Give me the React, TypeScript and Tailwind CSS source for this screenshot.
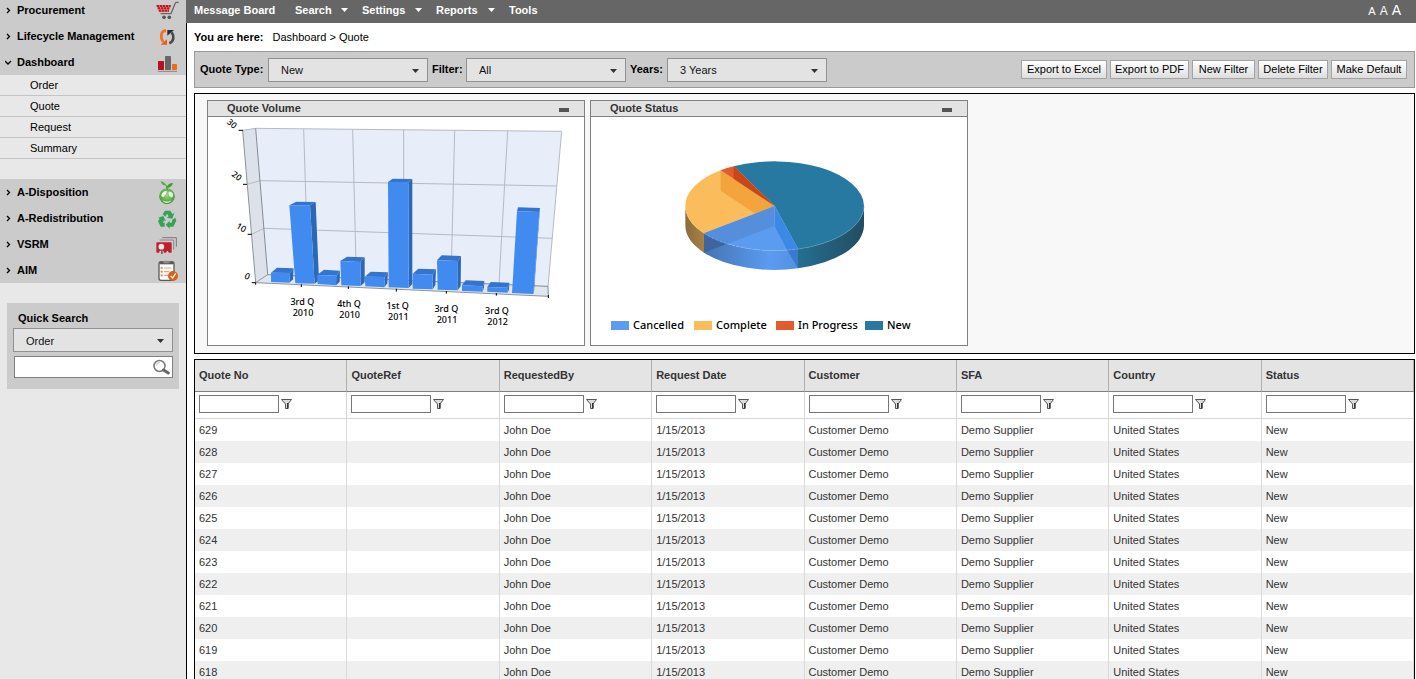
import { useState, type ReactNode } from "react";

/* ---------- Sidebar icons (24x24, drawn on a 72-unit grid) ---------- */

function Icon({ children }: { children: ReactNode }) {
  return (
    <svg className="h-6 w-6 shrink-0" viewBox="0 0 72 72" aria-hidden="true">
      {children}
    </svg>
  );
}

const CartIcon = () => (
  <Icon>
    <path d="M3 21h46l-8 22H15z" fill="#cf8f92" />
    <path d="M5 24h42M8 31h37M11 38h31" stroke="#c4161c" strokeWidth="6" strokeDasharray="7 2" />
    <path d="M71 13h-6c-3 0-4 1-5 4L48 47H17" fill="none" stroke="#666" strokeWidth="4" />
    <circle cx="27" cy="58" r="5.500" fill="#555" />
    <circle cx="43" cy="58" r="5.500" fill="#555" />
  </Icon>
);

const CycleIcon = () => (
  <Icon>
    <path d="M33 20C18 20 14 40 25 54" fill="none" stroke="#f37021" strokeWidth="8" />
    <path d="M17 62h19V46z" fill="#ef5a13" />
    <path d="M43 58c13-5 16-20 7-33" fill="none" stroke="#4a4a4a" strokeWidth="8" />
    <path d="M57 18H37v17z" fill="#2d2d2d" />
  </Icon>
);

const BarsIcon = () => (
  <Icon>
    <rect x="9" y="33" width="18" height="27" rx="2" fill="#b90f22" />
    <rect x="30" y="18" width="18" height="42" rx="2" fill="#666" />
    <rect x="51" y="42" width="15" height="18" rx="2" fill="#ef6a1a" />
    <path d="M9 64h57" stroke="#777" strokeWidth="2.500" />
  </Icon>
);

const EcoIcon = () => (
  <Icon>
    <defs>
      <radialGradient id="globe" cx="0.5" cy="0.4" r="0.62">
        <stop offset="0" stopColor="#a5d68c" />
        <stop offset="0.65" stopColor="#5fae4b" />
        <stop offset="1" stopColor="#37902d" />
      </radialGradient>
    </defs>
    <circle cx="36" cy="49" r="23.500" fill="url(#globe)" />
    <path d="M19 46c2-9 9-13 16-13 2 4-3 6-2 10-5 1-4 7-8 8-3 0-6-1-6-5z" fill="#f2faec" />
    <path d="M41 36c7-2 13 3 13 9 0 5-3 8-6 7-4-2-9-8-7-16z" fill="#eaf6e2" />
    <path d="M22 60c8 6 20 6 28 0-4 11-23 13-28 0z" fill="#d5f2b8" />
    <path d="M36 30c1-7-1-12-6-17" fill="none" stroke="#3a8f2a" strokeWidth="3" />
    <path d="M34 17c-4-8-9-12-17-13 1 8 8 13 17 13z" fill="#55b037" />
    <path d="M34 24c3-10 10-15 20-15-3 10-10 15-20 15z" fill="#3f9e27" />
  </Icon>
);

const RecycleIcon = () => (
  <Icon>
    <g fill="#35a356">
      <path d="M23 25l7-11h16l6 10 6-3-6 17-17-3 6-4-5-8-5 9z" />
      <path d="M52 41l9-6 3 9-9 18H44v6L32 56l12-12v6h6z" />
      <path d="M29 50v12H17L9 46l5-8-5-3 16-5 8 16-6-3-3 7z" />
    </g>
  </Icon>
);

const CardsIcon = () => (
  <Icon>
    <path d="M22 17h42v27" fill="none" stroke="#777" strokeWidth="3" />
    <path d="M14 24h42v29" fill="none" stroke="#888" strokeWidth="3" />
    <rect x="4" y="31" width="46" height="31" rx="2" fill="#c11f30" />
    <circle cx="19" cy="44" r="8.500" fill="#f0e6e6" />
    <path d="M12 62c1-9 14-9 15 0z" fill="#e6dada" />
    <path d="M18 54h5v12h-5z" fill="#666" />
    <path d="M33 62l4-6 5 6z" fill="#eee" />
  </Icon>
);

const ChecklistIcon = () => (
  <Icon>
    <rect x="12" y="12" width="45" height="55" rx="6" fill="#fff" stroke="#5b5b5b" strokeWidth="4" />
    <path d="M14 10h41v9H14z" fill="#5b5b5b" />
    <rect x="25" y="8" width="19" height="8" rx="3" fill="#8a8a8a" />
    <path d="M17 30h6M17 41h6M17 52h6" stroke="#f0703a" strokeWidth="5" />
    <path d="M27 30h22M27 41h16M27 52h12" stroke="#f2a182" strokeWidth="3.500" />
    <circle cx="54" cy="54" r="15" fill="#df5f16" />
    <path d="M47 54l6 6 9-14" fill="none" stroke="#fff" strokeWidth="4" />
  </Icon>
);

/* ---------- Small shared pieces ---------- */

function Chevron({ open = false }: { open?: boolean }) {
  return (
    <svg className="h-[7px] w-[7px] shrink-0" viewBox="0 0 7 7" fill="none" stroke="#000" strokeWidth="1.400" aria-hidden="true">
      <path d={open ? "M0 2l3 3L6 2" : "M2 1l2.500 2.500L2 6"} />
    </svg>
  );
}

function Dropdown({ id, options, className = "" }: { id: string; options: string[]; className?: string }) {
  return (
    <div className={`relative h-6 ${className}`}>
      <select
        id={id}
        className="h-6 w-full appearance-none rounded-none border border-[#919191] bg-[#e3e3e3] pt-[2px] pl-[12px] text-[11px] text-[#111] outline-none"
      >
        {options.map((o) => (
          <option key={o}>{o}</option>
        ))}
      </select>
      <svg className="pointer-events-none absolute top-[11px] right-[9px] h-1 w-[7px]" viewBox="0 0 7 4" aria-hidden="true">
        <path d="M0 0h7L3.500 4z" fill="#333" />
      </svg>
    </div>
  );
}

function MenuHeading({ label, icon, open, first }: { label: string; icon: ReactNode; open?: boolean; first?: boolean }) {
  return (
    <button
      type="button"
      className={`flex w-full items-center bg-[#cbcbcb] pr-[7px] pl-[5px] text-left text-[11px] font-bold text-black ${
        first ? "h-[23px] pb-[3px]" : "h-[26px]"
      }`}
    >
      <Chevron open={open} />
      <span className="ml-[5px] grow whitespace-nowrap">{label}</span>
      {icon}
    </button>
  );
}

function Sidebar() {
  return (
    <aside className="w-[186px] shrink-0 bg-[#e8e8e8]">
      <MenuHeading label="Procurement" icon={<CartIcon />} first />
      <MenuHeading label="Lifecycle Management" icon={<CycleIcon />} />
      <MenuHeading label="Dashboard" icon={<BarsIcon />} open />
      <ul>
        {["Order", "Quote", "Request", "Summary"].map((item) => (
          <li key={item} className="flex h-[21px] items-center border-b border-[#c4c4c4] pl-[30px] text-[11px]">
            <a href="#">{item}</a>
          </li>
        ))}
      </ul>
      <div className="mt-5">
        <MenuHeading label="A-Disposition" icon={<EcoIcon />} />
        <MenuHeading label="A-Redistribution" icon={<RecycleIcon />} />
        <MenuHeading label="VSRM" icon={<CardsIcon />} />
        <MenuHeading label="AIM" icon={<ChecklistIcon />} />
      </div>
      <form className="mx-[7px] mt-5 bg-[#cbcbcb] px-[6px] pt-[7px] pb-[11px]" onSubmit={(e) => e.preventDefault()}>
        <label htmlFor="quick-type" className="block h-[18px] pl-[5px] text-[11px] leading-4 font-bold">
          Quick Search
        </label>
        <Dropdown id="quick-type" options={["Order", "Quote", "Request"]} />
        <div className="mt-1 ml-px flex h-[22px] border border-[#808080] bg-white">
          <input aria-label="Search text" className="w-full min-w-0 bg-transparent px-1 text-[11px] outline-none" />
          <button type="submit" aria-label="Search" className="shrink-0 pr-[2px]">
            <svg className="h-[18px] w-[17px]" viewBox="0 0 17 18" fill="none" aria-hidden="true">
              <circle cx="6.500" cy="8" r="5.500" stroke="#777" strokeWidth="1.500" />
              <path d="M3.500 7.500a3 3 0 0 1 3-3" stroke="#bbb" />
              <path d="M10.500 12l4.800 3" stroke="#666" strokeWidth="3" strokeLinecap="round" />
            </svg>
          </button>
        </div>
      </form>
    </aside>
  );
}

function TopNav() {
  const items = [
    { label: "Message Board", menu: false, width: "w-[87px]" },
    { label: "Search", menu: true, width: "w-[53px]" },
    { label: "Settings", menu: true, width: "w-[60px]" },
    { label: "Reports", menu: true, width: "w-[59px]" },
    { label: "Tools", menu: false, width: "w-[30px]" },
  ];
  return (
    <nav className="flex h-[23px] items-center justify-between bg-[#666] pr-[15px] pb-[3px] pl-2 text-[11px] font-bold text-white">
      <div className="flex gap-[14px]">
        {items.map((i) => (
          <a key={i.label} href="#" className={`flex items-center justify-between ${i.width}`}>
            {i.label}
            {i.menu && (
              <svg className="h-1 w-[7px]" viewBox="0 0 7 4" aria-hidden="true">
                <path d="M0 0h7L3.500 4z" fill="#fff" />
              </svg>
            )}
          </a>
        ))}
      </div>
      <div className="flex items-baseline gap-1 leading-5 font-normal">
        <button type="button" aria-label="Small text" className="text-[11px]">A</button>
        <button type="button" aria-label="Medium text" className="text-[12px]">A</button>
        <button type="button" aria-label="Large text" className="text-[14px]">A</button>
      </div>
    </nav>
  );
}

function FilterBar() {
  const actions = [
    { label: "Export to Excel", width: "w-[86px]" },
    { label: "Export to PDF", width: "w-[79px]" },
    { label: "New Filter", width: "w-[63px]" },
    { label: "Delete Filter", width: "w-[70px]" },
    { label: "Make Default", width: "w-[76px]" },
  ];
  return (
    <div className="mt-[5px] flex h-[37px] items-center justify-between border border-[#999] bg-[#cbcbcb] pr-[7px] pl-[5px] text-[11px]">
      <div className="flex items-center">
        <label htmlFor="quote-type" className="w-[68px] font-bold whitespace-nowrap">Quote Type:</label>
        <Dropdown id="quote-type" options={["New", "Closed"]} className="w-40" />
        <label htmlFor="filter" className="ml-1 w-[34px] font-bold">Filter:</label>
        <Dropdown id="filter" options={["All", "Mine"]} className="w-40" />
        <label htmlFor="years" className="ml-1 w-[37px] font-bold">Years:</label>
        <Dropdown id="years" options={["3 Years", "5 Years"]} className="w-40" />
      </div>
      <div className="flex gap-[3px]">
        {actions.map((a) => (
          <button
            key={a.label}
            type="button"
            className={`flex h-[19px] items-center justify-center border border-[#a3a3a3] bg-linear-to-b from-white to-[#dedede] whitespace-nowrap ${a.width}`}
          >
            {a.label}
          </button>
        ))}
      </div>
    </div>
  );
}

/* ---------- Chart cards ---------- */

function Card({ title, children }: { title: string; children: ReactNode }) {
  const [open, setOpen] = useState(true);
  return (
    <section className="w-[378px] self-start border border-[#808080] bg-white">
      <header className="flex h-4 items-center justify-between border-b border-[#808080] bg-[#e3e3e3] pr-[15px] pl-[19px]">
        <h2 className="pb-[2px] text-[11px] leading-[14px] font-bold text-[#333]">{title}</h2>
        <button type="button" aria-label={`Collapse ${title}`} onClick={() => setOpen(!open)} className="mt-[2px] h-1 w-[10px] bg-[#555]" />
      </header>
      {open && <div className="h-[228px]">{children}</div>}
    </section>
  );
}

// Each bar: front face (4 points) and the two rear top points plus the rear bottom-right point.
const bars: [number, number][][] = [
  [[213, 533], [270, 534], [268, 563], [213, 561], [231, 518], [281, 520], [279, 553]],
  [[268, 331], [330, 331], [344, 566], [286, 565], [289, 320], [347, 321], [357, 556]],
  [[351, 540], [409, 542], [408, 571], [353, 567], [372, 524], [420, 527], [419, 560]],
  [[421, 498], [481, 501], [482, 573], [424, 571], [441, 485], [494, 487], [494, 562]],
  [[494, 545], [554, 546], [553, 577], [496, 574], [512, 530], [564, 532], [562, 565]],
  [[564, 261], [625, 261], [626, 579], [566, 577], [578, 251], [637, 252], [637, 567]],
  [[638, 536], [698, 539], [698, 583], [638, 581], [655, 521], [708, 523], [706, 570]],
  [[711, 496], [774, 498], [773, 586], [713, 584], [725, 481], [783, 483], [782, 573]],
  [[786, 571], [849, 574], [848, 590], [786, 588], [797, 556], [853, 558], [852, 577]],
  [[862, 576], [924, 578], [923, 593], [862, 590], [872, 561], [928, 563], [927, 583]],
  [[951, 349], [1018, 351], [1000, 597], [936, 594], [954, 337], [1020, 339], [1002, 590]],
];

const pts = (p: [number, number][]) => p.map((q) => q.join(",")).join(" ");

function VolumeChart() {
  const xLabels: [number, number, string, string][] = [
    [307, 629, "3rd Q", "2010"],
    [447, 635, "4th Q", "2010"],
    [593, 641, "1st Q", "2011"],
    [739, 651, "3rd Q", "2011"],
    [891, 656, "3rd Q", "2012"],
  ];
  const yLabels: [number, number, string, number][] = [
    [96, 86, "30", 40],
    [110, 243, "20", 35],
    [124, 398, "10", 30],
    [142, 544, "0", 25],
  ];
  return (
    <svg className="h-[228px] w-full overflow-visible" viewBox="24 66 1128 684" role="img" aria-label="Quote volume by quarter">
      <polygon points="128,106 167,100 203,539 167,563" fill="#dde2ea" />
      <polygon points="167,100 1085,109 1044,574 203,539" fill="#e7eef9" />
      <polygon points="167,563 203,539 1044,574 1045,604" fill="#dfe6ee" />
      <g stroke="#b5bac4" strokeWidth="3" fill="none">
        <path d="M311 103l14 442M458 104l11 447M611 105v452M764 106l-11 456M923 107l-26 461" />
        <path d="M141 268l40-11 889 16M155 418l37-18 865 30" />
        <path d="M128 106l39-6 918 9-41 465" />
      </g>
      <path d="M167 100l36 439 841 35 1 30" fill="none" stroke="#858b96" strokeWidth="3" />
      <path d="M128 106l39 457 878 41M167 563l36-24" fill="none" stroke="#8d939d" strokeWidth="3" />
      <path d="M116 106h13M129 268h12M143 418h12M155 563h12M167 563v6M304 568v8M445 574v8M589 581v9M739 588v8M889 594v8M1045 600v9" stroke="#000" strokeWidth="3" />
      {bars.map(([a, b, c, d, e, f, g], i) => (
        <g key={i}>
          <polygon points={pts([a, e, f, b])} fill="#3474cc" />
          <polygon points={pts([b, f, g, c])} fill="#2e67b4" />
          <polygon points={pts([a, b, c, d])} fill="#418bf0" />
        </g>
      ))}
      <g fontFamily="'Noto Sans', sans-serif" fontSize="27" fontWeight="500" fill="#000" textAnchor="middle">
        {xLabels.map(([x, y, q, yr], i) => (
          <g key={i}>
            <text x={x} y={y}>{q}</text>
            <text x={x + 2} y={y + 34}>{yr}</text>
          </g>
        ))}
        {yLabels.map(([x, y, t, r]) => (
          <text key={t} x={x} y={y} dy="9" fontSize="26" transform={`rotate(${r} ${x} ${y})`}>
            {t}
          </text>
        ))}
      </g>
    </svg>
  );
}

function StatusChart() {
  const legend = [
    { label: "Cancelled", swatch: "bg-[#5b9bf0]", width: "w-[83px]" },
    { label: "Complete", swatch: "bg-[#fbbd5c]", width: "w-[82px]" },
    { label: "In Progress", swatch: "bg-[#e35a2c]", width: "w-[89px]" },
    { label: "New", swatch: "bg-[#2779a1]", width: "w-[50px]" },
  ];
  return (
    <>
      <svg className="h-[199px] w-full" viewBox="15 67 1128 597" role="img" aria-label="Quote status breakdown">
        <defs>
          <linearGradient id="sideNew" x1="0" x2="1">
            <stop offset="0" stopColor="#246f92" />
            <stop offset="1" stopColor="#244c60" />
          </linearGradient>
          <linearGradient id="sideCancel" x1="0" x2="1">
            <stop offset="0" stopColor="#4574b3" />
            <stop offset="0.7" stopColor="#5b9bf0" />
            <stop offset="1" stopColor="#5490e0" />
          </linearGradient>
          <linearGradient id="sideComplete" x1="0" x2="1">
            <stop offset="0" stopColor="#8a6c3c" />
            <stop offset="1" stopColor="#a98046" />
          </linearGradient>
        </defs>
        <path d="M834 334A268 134 0 0 1 636 463V521A268 134 0 0 0 834 392z" fill="url(#sideNew)" />
        <path d="M298 334A268 134 0 0 0 354 416V474A268 134 0 0 1 298 392z" fill="url(#sideComplete)" />
        <path d="M354 416A268 134 0 0 0 636 463V521A268 134 0 0 1 354 474z" fill="url(#sideCancel)" />
        <path d="M354 416L424 447 354 474z" fill="#3e659c" />
        <path d="M604 467L636 463V521z" fill="#3a79cb" />
        <path d="M566 334L443 215A268 134 0 0 1 834 334A268 134 0 0 1 636 463z" fill="#2779a1" />
        <path d="M566 334L354 416A268 134 0 0 1 298 334A268 134 0 0 1 404 227z" fill="#fbbd5c" />
        <path d="M404 227L566 334 508 357 404 288z" fill="#f3a43c" />
        <path d="M566 334L404 227A268 134 0 0 1 443 215z" fill="#e35a2c" />
        <path d="M443 215L566 334 443 252z" fill="#c84618" />
        <path d="M566 334L636 463A268 134 0 0 1 354 416z" fill="#5b9bf0" />
        <path d="M566 334V394L424 447Q386 436 354 416z" fill="#558edb" />
        <path d="M566 334L636 463 604 467 566 394z" fill="#3b88e5" />
        <path d="M566 334V394" stroke="#6fa4e8" strokeWidth="2" />
        <path d="M354 416A268 134 0 0 0 636 463" fill="none" stroke="#86b4f2" strokeWidth="2" strokeDasharray="9 4" />
        <path d="M636 463A268 134 0 0 0 834 334" fill="none" stroke="#5795b4" strokeWidth="2" />
      </svg>
      <ul className="flex pl-5 font-['Noto_Sans',sans-serif] text-[11px] leading-[18px] font-medium">
        {legend.map((l) => (
          <li key={l.label} className={`flex items-center gap-1 whitespace-nowrap ${l.width}`}>
            <span className={`h-[9px] w-[18px] shrink-0 ${l.swatch}`} />
            {l.label}
          </li>
        ))}
      </ul>
    </>
  );
}

/* ---------- Quotes table ---------- */

const columns = ["Quote No", "QuoteRef", "RequestedBy", "Request Date", "Customer", "SFA", "Country", "Status"];
const rows = Array.from({ length: 12 }, (_, i) => [
  String(629 - i), "", "John Doe", "1/15/2013", "Customer Demo", "Demo Supplier", "United States", "New",
]);

function Funnel() {
  return (
    <svg className="h-[10px] w-[11px]" viewBox="0 0 11 10" aria-hidden="true">
      <path d="M.5.5h10L7 5v4.500H4.500V5z" fill="#ddd" stroke="#555" />
      <path d="M6 4h1.500v5.500H6z" fill="#333" />
    </svg>
  );
}

function QuotesTable() {
  return (
    <div className="mt-[5px] border border-black">
      <table className="w-full table-fixed border-separate border-spacing-0 text-[11px] text-[#333]">
        <thead>
          <tr className="h-8 bg-[#e4e4e4]">
            {columns.map((c) => (
              <th key={c} scope="col" className="border-r border-b border-r-[#b0b0b0] border-b-[#808080] py-0 pl-1 text-left font-bold">
                {c}
              </th>
            ))}
          </tr>
          <tr className="h-[27px]">
            {columns.map((c) => (
              <td key={c} className="border-r border-b border-[#d5d5d5] py-0 pl-1">
                <div className="flex items-center gap-[2px] pb-[2px]">
                  <input aria-label={`Filter ${c}`} className="h-[18px] w-20 border border-[#777] bg-white px-1 outline-none" />
                  <button type="button" aria-label={`Filter options for ${c}`}>
                    <Funnel />
                  </button>
                </div>
              </td>
            ))}
          </tr>
        </thead>
        <tbody>
          {rows.map((r) => (
            <tr key={r[0]} className="h-[22px] even:bg-[#efefef]">
              {r.map((v, i) => (
                <td key={i} className="border-r border-[#d9d9d9] py-0 pl-1">
                  {v}
                </td>
              ))}
            </tr>
          ))}
        </tbody>
      </table>
    </div>
  );
}

export default function App() {
  return (
    <div className="flex h-screen overflow-hidden bg-white font-['Liberation_Sans',Arial,sans-serif] text-black">
      <Sidebar />
      <div className="flex min-w-0 grow flex-col">
        <TopNav />
        <main className="grow border-l border-black pr-px pl-[7px]">
          <p className="pt-[6px] text-[11px] leading-[17px]">
            <strong className="mr-[9px]">You are here:</strong>
            <a href="#">Dashboard</a> &gt; <a href="#">Quote</a>
          </p>
          <FilterBar />
          <div className="mt-[5px] flex gap-[5px] border border-black bg-[#f8f8f8] px-3 pt-[6px] pb-[7px]">
            <Card title="Quote Volume">
              <VolumeChart />
            </Card>
            <Card title="Quote Status">
              <StatusChart />
            </Card>
          </div>
          <QuotesTable />
        </main>
      </div>
    </div>
  );
}
